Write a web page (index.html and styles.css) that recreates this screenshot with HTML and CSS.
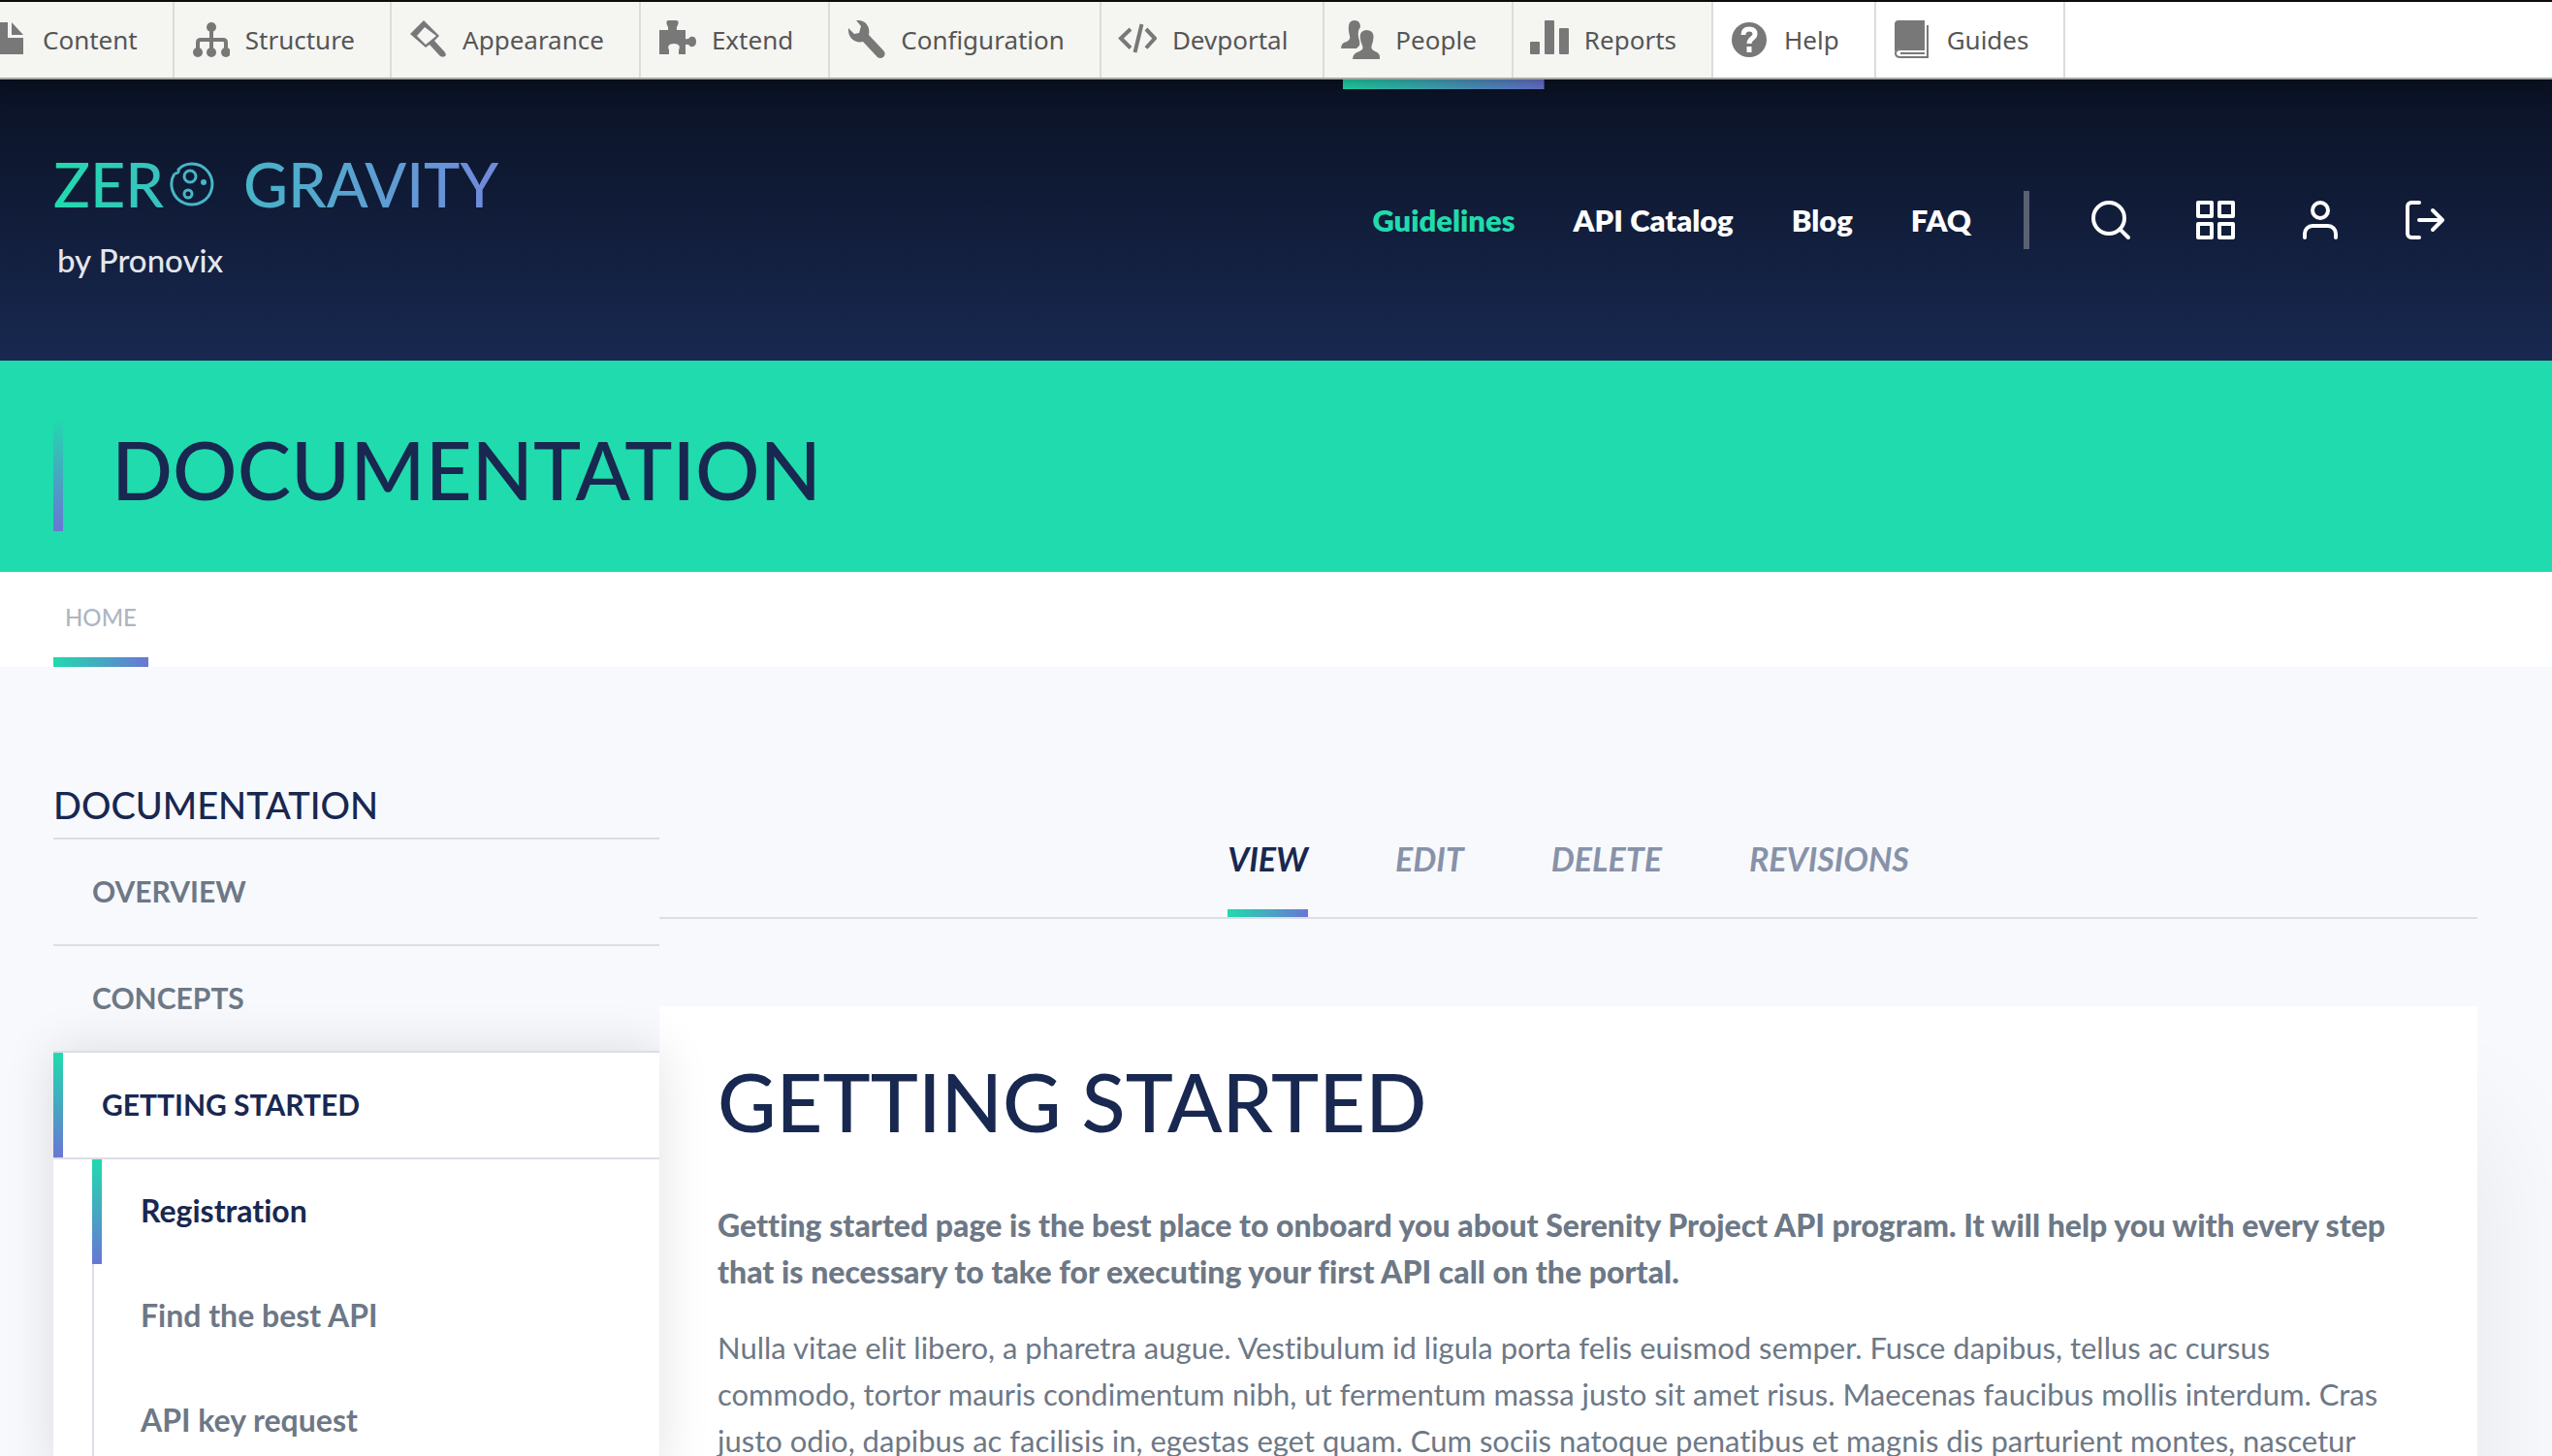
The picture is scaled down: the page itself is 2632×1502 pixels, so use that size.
FILE: index.html
```html
<!DOCTYPE html>
<html lang="en">
<head>
<meta charset="utf-8">
<meta name="viewport" content="width=device-width, initial-scale=1">
<title>Documentation | Zero Gravity</title>
<link rel="stylesheet" href="styles.css">
</head>
<body>
<nav class="toolbar" aria-label="Administration">
  <ul class="toolbar-list">
    <li class="toolbar-item"><a class="toolbar-link" href="#content"><svg class="toolbar-icon" viewBox="0 0 40 40" aria-hidden="true"><path d="M0 2h20v16h16v17H0zM24 2l12 13H24z"/></svg>Content</a></li>
    <li class="toolbar-item"><a class="toolbar-link" href="#structure"><svg class="toolbar-icon" viewBox="0 0 40 40" aria-hidden="true"><circle cx="21" cy="7" r="5"/><circle cx="7" cy="33" r="5"/><circle cx="21" cy="33" r="5"/><circle cx="36" cy="33" r="5"/><path d="M21 7v24M7 31v-8q0-3 3-3h23q3 0 3 3v8" fill="none" stroke="currentColor" stroke-width="4"/></svg>Structure</a></li>
    <li class="toolbar-item"><a class="toolbar-link" href="#appearance"><svg class="toolbar-icon" viewBox="0 0 40 40" aria-hidden="true"><path fill-rule="evenodd" d="M16 0 2 14l16 14 4-3 11 12q4 2 6-1l-1-3-11-12 5-5zM17 7l12 9-11 9-9-9z"/></svg>Appearance</a></li>
    <li class="toolbar-item"><a class="toolbar-link" href="#extend"><svg class="toolbar-icon" viewBox="0 0 40 40" aria-hidden="true"><path d="M2 10h9q1-3-1-5-2-5 2-5h7q4 0 2 5-2 2-1 5h9v9q3 1 5-2 6-1 6 5t-6 5q-2-3-5-2v10h-7v-4q3-7-5-7t-5 7v4H2z"/></svg>Extend</a></li>
    <li class="toolbar-item"><a class="toolbar-link" href="#configuration"><svg class="toolbar-icon" viewBox="0 0 40 40" aria-hidden="true"><path d="M10 0c9-1 15 6 13 15l15 16a4 4 0 0 1-6 7L17 22C9 24 1 18 2 8l6 6 5-1 2-7z"/></svg>Configuration</a></li>
    <li class="toolbar-item"><a class="toolbar-link" href="#devportal"><svg class="toolbar-icon" viewBox="0 0 40 40" aria-hidden="true"><path d="M13 9 3 18.500l10 10M29 9l9 9.500-9 10M24.500 4l-7 29" fill="none" stroke="currentColor" stroke-width="4"/></svg>Devportal</a></li>
    <li class="toolbar-item"><a class="toolbar-link" href="#people"><svg class="toolbar-icon" viewBox="0 0 40 40" aria-hidden="true"><path d="M0 29q0-6 6-7 4-2 3-6-4-16 5-16 6 0 6 7-3 3-2 10 2 6 1 9l-3 3zM12 40q0-6 7-8 5-2 3-6-6-15 4-16 11 0 6 15-2 5 3 7 6 2 5 8z"/></svg>People</a></li>
    <li class="toolbar-item"><a class="toolbar-link" href="#reports"><svg class="toolbar-icon" viewBox="0 0 40 40" aria-hidden="true"><rect y="22" width="10" height="13" rx="1"/><rect x="15" width="10" height="35" rx="1"/><rect x="30" y="8" width="10" height="27" rx="1"/></svg>Reports</a></li>
    <li class="toolbar-item toolbar-item-plain"><a class="toolbar-link" href="#help"><svg class="toolbar-icon" viewBox="0 0 40 40" aria-hidden="true"><circle cx="20" cy="20" r="18"/><path d="M14 15q0-6 6-6t6 5c0 5-6 4-6 10M20 27v6" fill="none" stroke="#fff" stroke-width="5"/></svg>Help</a></li>
    <li class="toolbar-item toolbar-item-plain"><a class="toolbar-link" href="#guides"><svg class="toolbar-icon" viewBox="0 0 40 40" aria-hidden="true"><path d="M6 0h27v29H8q-6 1-6 4V4q0-4 4-4z"/><path d="M36 5v33H8q-5 0-5-4t5-4h25M8 34h25" fill="none" stroke="currentColor" stroke-width="2"/></svg>Guides</a></li>
  </ul>
</nav>

<header class="header">
  <a class="logo" href="#home" aria-label="Zero Gravity by Pronovix">
    <span class="logo-name">
      <span class="logo-zero">ZER</span>
      <svg class="logo-planet" viewBox="0 0 46 46" aria-hidden="true"><g fill="none" stroke="#48b5c8" stroke-width="3"><path d="M5 12A21 21 0 1 0 23 2Q14 2 9 8q1 4-4 4"/><circle cx="21" cy="15" r="6"/><circle cx="19" cy="33" r="4"/></g><circle cx="35" cy="21" r="3" fill="#48b5c8"/></svg>
      <span class="logo-gravity">GRAVITY</span>
    </span>
    <span class="logo-by">by Pronovix</span>
  </a>
  <nav class="main-nav" aria-label="Main">
    <a class="nav-link nav-link-active" href="#guidelines">Guidelines</a>
    <a class="nav-link" href="#catalog">API Catalog</a>
    <a class="nav-link" href="#blog">Blog</a>
    <a class="nav-link" href="#faq">FAQ</a>
  </nav>
  <div class="actions">
    <button class="action" type="button" aria-label="Search"><svg class="action-icon" viewBox="0 0 24 24"><circle cx="11" cy="11" r="8"/><path d="m21 21-4.350-4.350"/></svg></button>
    <button class="action" type="button" aria-label="Apps"><svg class="action-icon" viewBox="0 0 24 24"><path d="M3 3h7v7H3zM14 3h7v7h-7zM14 14h7v7h-7zM3 14h7v7H3z"/></svg></button>
    <button class="action" type="button" aria-label="Account"><svg class="action-icon" viewBox="0 0 24 24"><path d="M20 21v-2a4 4 0 0 0-4-4H8a4 4 0 0 0-4 4v2"/><circle cx="12" cy="7" r="4"/></svg></button>
    <button class="action" type="button" aria-label="Log out"><svg class="action-icon" viewBox="0 0 24 24"><path d="M9 21H5a2 2 0 0 1-2-2V5a2 2 0 0 1 2-2h4M16 17l5-5-5-5M21 12H9"/></svg></button>
  </div>
</header>

<section class="banner">
  <h1 class="banner-title">DOCUMENTATION</h1>
</section>

<nav class="breadcrumbs" aria-label="Breadcrumb">
  <a class="crumb" href="#home">HOME</a>
</nav>

<div class="page">
  <aside class="sidebar">
    <h2 class="sidebar-title">DOCUMENTATION</h2>
    <ul class="menu">
      <li class="menu-item"><a class="menu-link" href="#overview">OVERVIEW</a></li>
      <li class="menu-item"><a class="menu-link" href="#concepts">CONCEPTS</a></li>
      <li class="menu-item menu-item-open">
        <a class="menu-link menu-link-active" href="#getting-started">GETTING STARTED</a>
        <ul class="submenu">
          <li><a class="menu-link menu-link-active" href="#registration">Registration</a></li>
          <li><a class="menu-link" href="#find">Find the best API</a></li>
          <li><a class="menu-link" href="#key">API key request</a></li>
        </ul>
      </li>
    </ul>
  </aside>
  <main class="content">
    <nav class="tabs" aria-label="Tabs">
      <a class="tab tab-active" href="#view">VIEW</a>
      <a class="tab" href="#edit">EDIT</a>
      <a class="tab" href="#delete">DELETE</a>
      <a class="tab" href="#revisions">REVISIONS</a>
    </nav>
    <article class="article">
      <h2 class="article-title">GETTING STARTED</h2>
      <p class="lead">Getting started page is the best place to onboard you about Serenity Project API program. It will help you with every step<br>that is necessary to take for executing your first API call on the portal.</p>
      <p class="text">Nulla vitae elit libero, a pharetra augue. Vestibulum id ligula porta felis euismod semper. Fusce dapibus, tellus ac cursus<br>commodo, tortor mauris condimentum nibh, ut fermentum massa justo sit amet risus. Maecenas faucibus mollis interdum. Cras<br>justo odio, dapibus ac facilisis in, egestas eget quam. Cum sociis natoque penatibus et magnis dis parturient montes, nascetur</p>
    </article>
  </main>
</div>
</body>
</html>
```
FILE: styles.css
```css
* { box-sizing: border-box; }

:root {
  --green: #20dbad;
  --violet: #6a75d5;
  --navy: #182850;
  --slate: #6d7886;
  --line: #dcdde6;
}

body {
  margin: 0;
  background: #f8f9fd;
  color: var(--slate);
  font: 31px/48px Lato, sans-serif;
  font-variant-ligatures: none;
}

a { color: inherit; text-decoration: none; }
ul { list-style: none; margin: 0; padding: 0; }
h1, h2, p { margin: 0; }

/* Administration toolbar */
.toolbar {
  position: relative;
  z-index: 2;
  overflow-x: clip;
  background: #fff;
  border-top: 2px solid #0f0c0c;
  border-bottom: 2px solid #a6a9a9;
  box-shadow: 0 3px 20px rgba(0, 0, 0, 0.4);
}
.toolbar-list { display: flex; margin-left: -29px; }
.toolbar-item { background: #f5f5f2; border-right: 2px solid #dcdcdc; }
.toolbar-item-plain { background: #fff; }
.toolbar-link {
  display: flex;
  align-items: center;
  gap: 16px;
  height: 78px;
  padding: 0 36px 0 17px;
  color: #565656;
  font: 26px/40px "Noto Sans", sans-serif;
}
.toolbar-icon { width: 40px; height: 40px; fill: currentColor; color: #787878; }

/* Site header */
.header {
  display: flex;
  height: 290px;
  padding: 0 77px 0 55px;
  background: linear-gradient(#0a1224, #182850);
}
.logo { display: flex; flex-direction: column; margin-right: auto; padding-top: 72px; }
.logo-name { display: flex; align-items: center; height: 72px; font-size: 63px; font-weight: 500; line-height: 72px; }
.logo-zero, .logo-gravity { background-clip: text; -webkit-background-clip: text; color: transparent; }
.logo-zero { background-image: linear-gradient(90deg, #20dbad, #3bc0c0); }
.logo-gravity { background-image: linear-gradient(90deg, #48b5c8, #7189dc); }
.logo-planet { width: 46px; height: 46px; margin: 0 30px 0 6px; }
.logo-by { padding: 18px 0 0 4px; color: #e4e6ed; font-size: 33px; font-weight: 500; }
.main-nav { display: flex; }
.nav-link {
  padding: 0 30px;
  color: #fff;
  font-size: 31px;
  font-weight: 800;
  line-height: 290px;
}
.nav-link-active {
  background: linear-gradient(90deg, var(--green), var(--violet)) top / 100% 10px no-repeat;
  color: var(--green);
}
.actions {
  display: flex;
  align-self: center;
  align-items: center;
  height: 60px;
  gap: 60px;
  margin-left: 24px;
  padding: 0 30px 0 60px;
  border-left: 6px solid #5b6174;
}
.action { display: flex; padding: 0; border: 0; background: none; color: #fff; }
.action-icon {
  width: 48px;
  height: 48px;
  fill: none;
  stroke: currentColor;
  stroke-width: 2;
  stroke-linecap: round;
  stroke-linejoin: round;
}

/* Page banner */
.banner { padding: 60px 55px 42px; background: var(--green); }
.banner-title {
  padding: 0 0 12px 50px;
  border-left: 10px solid;
  border-image: linear-gradient(var(--green), var(--violet)) 1;
  color: var(--navy);
  font-size: 83px;
  font-weight: 500;
  line-height: 104px;
}

.breadcrumbs { display: flex; padding: 0 55px; background: #fff; }
.crumb {
  padding: 23px 12px 17px;
  border-bottom: 10px solid;
  border-image: linear-gradient(90deg, var(--green), var(--violet)) 1;
  color: #aeb6c2;
  font-size: 24px;
  font-weight: 500;
}

/* Documentation page */
.page { display: grid; grid-template-columns: 1fr 3fr; padding: 0 77px 0 55px; }
.sidebar { position: relative; z-index: 1; padding-top: 118px; }
.sidebar-title {
  padding-bottom: 10px;
  color: var(--navy);
  font-size: 38px;
  font-weight: 500;
}
.menu-item { border-top: 2px solid var(--line); }
.menu-item-open { background: #fff; box-shadow: 0 0 50px rgba(0, 0, 0, 0.12); }
.menu-link {
  display: block;
  padding: 29px 40px 31px;
  font-size: 30px;
  font-weight: 700;
}
.menu-link-active {
  border-left: 10px solid;
  border-image: linear-gradient(var(--green), var(--violet)) 1;
  color: var(--navy);
}
.submenu {
  padding-left: 40px;
  border-top: 2px solid var(--line);
  background: linear-gradient(var(--line), var(--line)) 40px 0 / 2px 100% no-repeat;
}
.submenu .menu-link { padding-left: 50px; font-size: 32px; }
.submenu .menu-link-active { padding-left: 40px; }

.content { padding-top: 178px; }
.tabs { display: flex; justify-content: center; gap: 90px; border-bottom: 2px solid var(--line); }
.tab {
  padding-bottom: 32px;
  border-bottom: 8px solid transparent;
  color: #8792a8;
  font-size: 34px;
  font-style: italic;
  font-weight: 700;
  line-height: 40px;
}
.tab-active {
  border-image: linear-gradient(90deg, var(--green), var(--violet)) 1;
  color: var(--navy);
}
.article {
  margin-top: 90px;
  padding: 50px 60px;
  background: #fff;
  box-shadow: 0 120px 120px rgba(0, 0, 0, 0.08);
}
.article-title {
  color: var(--navy);
  font-size: 83px;
  font-weight: 500;
  line-height: 96px;
}
.lead { margin-top: 56px; font-size: 32px; font-weight: 900; }
.text { margin-top: 30px; }
```
